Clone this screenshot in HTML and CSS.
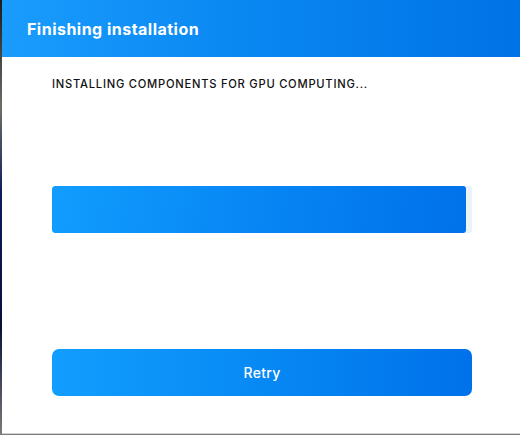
FILE: index.html
```html
<!DOCTYPE html>
<html lang="en">
<head>
    <meta charset="UTF-8">
    <meta name="viewport" content="width=device-width, initial-scale=1.0">
    <title>Finishing installation</title>
    <link rel="stylesheet" href="styles.css">
</head>
<body>

<div class="window">
    <div class="header">
        <h1>Finishing installation</h1>
    </div>
    <div class="content">
        <p class="status">INSTALLING COMPONENTS FOR GPU COMPUTING...</p>
        <div class="progress">
            <div class="progress-fill" style="width: 98.6%"></div>
        </div>
        <button class="retry">Retry</button>
    </div>
</div>

</body>
</html>
```

FILE: styles.css
```css
body {
    margin: 0;
    height: 435px;
    overflow: hidden;
    background: linear-gradient(180deg, #1c1c1c 0%, #6b6f66 25%, #0d1a5c 45%, #0a0f3a 75%, #7a7d78 100%);
    font-family: Inter, "Open Sans", sans-serif;
}
.window {
    margin-left: 2px;
    height: 433px;
    background: #ffffff;
    border-bottom: 1px solid #d3d3d3;
    display: flex;
    flex-direction: column;
}
.header {
    height: 57px;
    display: flex;
    align-items: center;
    padding-left: 25px;
    background: linear-gradient(90deg, #1a9cfd 0%, #0a88f2 45%, #0073e6 100%);
}
.header h1 {
    margin: 0;
    font-size: 16px;
    font-weight: 700;
    color: #ffffff;
    letter-spacing: 0.48px;
}
.content {
    padding: 0 48px 0 50px;
    display: flex;
    flex-direction: column;
}
.status {
    margin: 20px 0 0;
    font-size: 11.2px;
    font-weight: 500;
    color: #111111;
    letter-spacing: 0.75px;
}
.progress {
    margin-top: 95px;
    height: 47px;
    background: #ebf3f8;
    border-radius: 3px;
    overflow: hidden;
}
.progress-fill {
    height: 100%;
    background: linear-gradient(100deg, #119dfe 0%, #0888f5 45%, #0071ea 100%);
    border-radius: 3px;
}
.retry {
    margin-top: 116px;
    height: 47px;
    border: none;
    border-radius: 7px;
    background: linear-gradient(90deg, #129efe 0%, #0789f4 50%, #0071ea 100%);
    color: #ffffff;
    font-family: Inter, "Open Sans", sans-serif;
    font-size: 14px;
    font-weight: 500;
    letter-spacing: 0.3px;
    cursor: pointer;
}
```
